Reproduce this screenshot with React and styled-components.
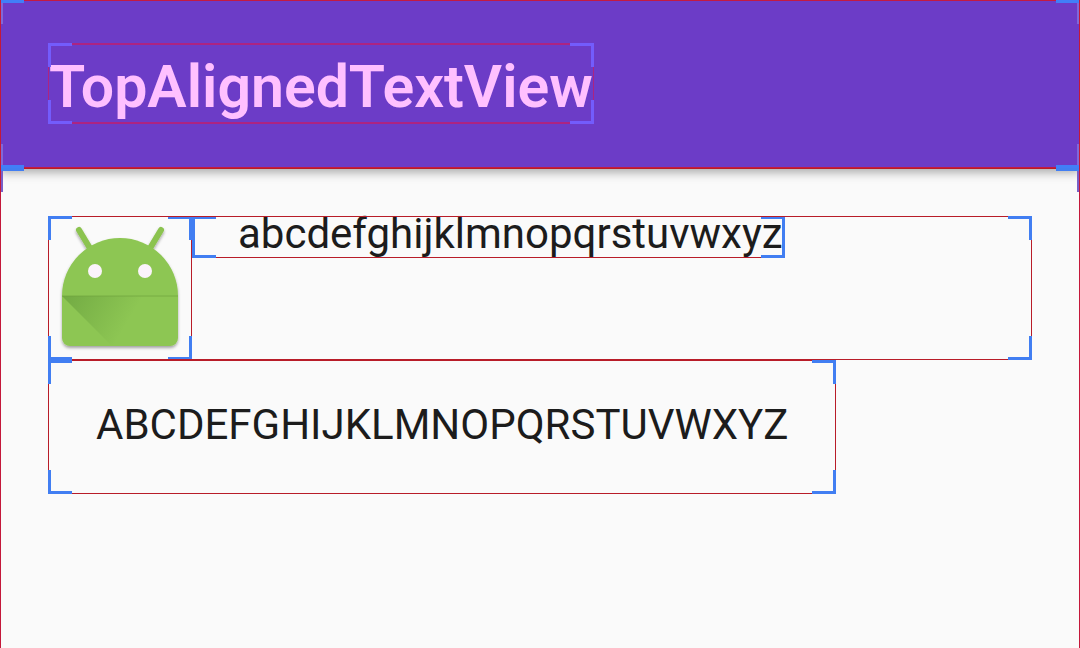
import React from "react";
import styled, { createGlobalStyle, css } from "styled-components";

const GlobalStyle = createGlobalStyle`
  * { box-sizing: border-box; }
  body {
    margin: 0;
    background: #fafafa;
    color: #1c1c1c;
    font-family: Roboto, "Liberation Sans", sans-serif;
  }
`;

/* Layout-bounds overlay: thin red edges with thick blue corner brackets. */
const bounds = css`
  position: relative;
  &::after {
    --c: linear-gradient(${(p) => p.$corner || "#417ef2"} 0 0);
    --v: linear-gradient(${(p) => p.$side || p.$corner || "#417ef2"} 0 0);
    --e: linear-gradient(${(p) => p.$edge || "#b81c28"} 0 0);
    --w: ${(p) => p.$weight || 1}px;
    content: "";
    position: absolute;
    inset: 0;
    pointer-events: none;
    background:
      var(--c) 0 0 / 24px 3px,
      var(--v) 0 0 / 3px 24px,
      var(--c) 100% 0 / 24px 3px,
      var(--v) 100% 0 / 3px 24px,
      var(--c) 0 100% / 24px 3px,
      var(--v) 0 100% / 3px 24px,
      var(--c) 100% 100% / 24px 3px,
      var(--v) 100% 100% / 3px 24px,
      var(--e) 0 0 / 100% var(--w),
      var(--e) 0 100% / 100% var(--w),
      var(--e) 0 0 / 1px 100%,
      var(--e) 100% 0 / 1px 100%;
    background-repeat: no-repeat;
  }
`;

const Screen = styled.div`
  position: relative;
  display: flex;
  flex-direction: column;
  min-height: 100vh;
  overflow: hidden;
  &::after {
    content: "";
    position: absolute;
    inset: 0;
    pointer-events: none;
    border: solid #c4183a;
    border-width: 0 1px;
  }
`;

const AppBar = styled.header`
  ${bounds}
  display: flex;
  align-items: flex-start;
  min-height: 168px;
  padding: 43px 48px;
  background: #6c3cc7;
  box-shadow: 0 4px 10px rgba(0, 0, 0, 0.35);
`;

const Title = styled.h1`
  ${bounds}
  margin: 0;
  padding: 6px 1px 0;
  color: #ffc0ff;
  font-size: 59px;
  font-weight: 600;
  line-height: 75px;
`;

const Content = styled.main`
  ${bounds}
  flex: 1;
  display: flex;
  flex-direction: column;
  align-items: flex-start;
  padding: 48px;
  margin-bottom: -24px;
`;

const Row = styled.div`
  ${bounds}
  display: flex;
  align-items: flex-start;
  align-self: stretch;
`;

const IconBox = styled.div`
  ${bounds}
  width: 144px;
  height: 144px;
`;

const TopText = styled.p`
  ${bounds}
  margin: 0;
  padding: 0 2px 6px 46px;
  font-size: 42px;
  line-height: 36px;
`;

const PaddedText = styled.p`
  ${bounds}
  margin: 0;
  padding: 38px 48px 42px;
  font-size: 42px;
  line-height: 54px;
`;

const AndroidIcon = () => (
  <svg width="144" height="144" viewBox="0 0 144 144" role="img" aria-label="Android">
    <defs>
      <linearGradient id="fold" x1="14" y1="80" x2="74" y2="116" gradientUnits="userSpaceOnUse">
        <stop offset="0" stopColor="#33691e" stopOpacity="0.3" />
        <stop offset="1" stopColor="#33691e" stopOpacity="0" />
      </linearGradient>
      <filter id="drop" x="-10%" y="-10%" width="120%" height="125%">
        <feDropShadow dx="0" dy="2" stdDeviation="1.5" floodColor="#000" floodOpacity="0.35" />
      </filter>
    </defs>
    <g filter="url(#drop)">
      <path d="M31 14L43 34M113 14L101 34" stroke="#8bc34f" strokeWidth="6" strokeLinecap="round" />
      <path d="M14 80a58 58 0 0 1 116 0V122a8 8 0 0 1-8 8H22a8 8 0 0 1-8-8Z" fill="#8dc652" />
    </g>
    <path d="M14 80H130V122a8 8 0 0 1-8 8H64Z" fill="url(#fold)" />
    <path d="M14 80H130" stroke="#6fa33c" strokeOpacity="0.7" />
    <circle cx="47" cy="55" r="7" fill="#fbf3fb" />
    <circle cx="97" cy="55" r="7" fill="#fbf3fb" />
  </svg>
);

export default function App() {
  return (
    <Screen>
      <GlobalStyle />
      <AppBar $edge="#c41a42" $corner="#417ef8" $side="#8068d8">
        <Title $edge="#ac2482" $corner="#735cfc" $weight={2}>
          TopAlignedTextView
        </Title>
      </AppBar>
      <Content $side="#7860c8">
        <Row>
          <IconBox>
            <AndroidIcon />
          </IconBox>
          <TopText>abcdefghijklmnopqrstuvwxyz</TopText>
        </Row>
        <PaddedText>ABCDEFGHIJKLMNOPQRSTUVWXYZ</PaddedText>
      </Content>
    </Screen>
  );
}
